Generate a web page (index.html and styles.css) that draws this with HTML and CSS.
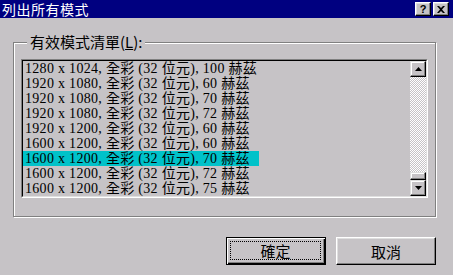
FILE: index.html
```html
<!DOCTYPE html>
<html lang="zh-Hant">
<head>
    <meta charset="UTF-8">
    <title>列出所有模式</title>
    <link rel="stylesheet" href="styles.css">
</head>
<body>
    <div class="dialog">
        <div class="titlebar">
            <span class="title">列出所有模式</span>
            <div class="caption-buttons">
                <div class="cap-btn">?</div>
                <div class="cap-btn">
                    <svg width="8" height="7" viewBox="0 0 8 7"><path d="M0 0h2l2 2 2-2h2L5 3.5 8 7H6L4 5 2 7H0l3-3.5z" fill="#000"/></svg>
                </div>
            </div>
        </div>

        <div class="content">
            <div class="group">
                <span class="group-label">有效模式清單(<u>L</u>):</span>
                <div class="listbox">
                    <div class="listbox-inner">
                        <div class="items">
                            <!-- 模式清單 -->
                            <div class="item">1280 x 1024, 全彩 (32 位元), 100 赫茲</div>
                            <div class="item">1920 x 1080, 全彩 (32 位元), 60 赫茲</div>
                            <div class="item">1920 x 1080, 全彩 (32 位元), 70 赫茲</div>
                            <div class="item">1920 x 1080, 全彩 (32 位元), 72 赫茲</div>
                            <div class="item">1920 x 1200, 全彩 (32 位元), 60 赫茲</div>
                            <div class="item">1600 x 1200, 全彩 (32 位元), 60 赫茲</div>
                            <div class="item selected">1600 x 1200, 全彩 (32 位元), 70 赫茲</div>
                            <div class="item">1600 x 1200, 全彩 (32 位元), 72 赫茲</div>
                            <div class="item">1600 x 1200, 全彩 (32 位元), 75 赫茲</div>
                        </div>
                        <div class="scrollbar">
                            <div class="sb-btn">
                                <svg width="7" height="4" viewBox="0 0 7 4"><path d="M3.5 0L7 4H0z" fill="#000"/></svg>
                            </div>
                            <div class="sb-track"></div>
                            <div class="sb-thumb"></div>
                            <div class="sb-btn">
                                <svg width="7" height="4" viewBox="0 0 7 4"><path d="M0 0h7L3.5 4z" fill="#000"/></svg>
                            </div>
                        </div>
                    </div>
                </div>
            </div>

            <div class="actions">
                <button class="btn default"><span class="focus">確定</span></button>
                <button class="btn">取消</button>
            </div>
        </div>
    </div>
</body>
</html>
```

FILE: styles.css
```css
* {
    box-sizing: border-box;
}
body {
    margin: 0;
    background-color: #c6c3c6;
    font-family: "Noto Sans CJK TC", sans-serif;
    color: #000;
}
.dialog {
    width: 453px;
    height: 275px;
    background-color: #c6c3c6;
}
.titlebar {
    height: 18px;
    background-color: #000080;
    color: #fff;
    display: flex;
    align-items: center;
    justify-content: space-between;
    padding: 0 4px 0 2px;
}
.title {
    font-size: 14px;
    line-height: 16px;
    letter-spacing: 0.5px;
}
.caption-buttons {
    display: flex;
    gap: 2px;
}
.cap-btn {
    width: 16px;
    height: 14px;
    background-color: #c6c3c6;
    border: 1px solid;
    border-color: #fff #000 #000 #fff;
    box-shadow: inset -1px -1px 0 #808080, inset 1px 1px 0 #dfdfdf;
    display: flex;
    align-items: center;
    justify-content: center;
    font: bold 11px "Liberation Sans", sans-serif;
    color: #000;
}
.content {
    padding: 24px 17px 0 13px;
}
.group {
    height: 175px;
    border: 1px solid #808080;
    box-shadow: 1px 1px 0 #fff, inset 1px 1px 0 #fff;
    padding-left: 7px;
}
.group-label {
    display: block;
    width: fit-content;
    height: 17px;
    margin: -10px 0 0 6px;
    padding: 0 3px;
    background-color: #c6c3c6;
    font-size: 15px;
    line-height: 17px;
}
.listbox {
    margin-top: 9px;
    width: 407px;
    height: 139px;
    border: 1px solid;
    border-color: #808080 #fff #fff #808080;
}
.listbox-inner {
    height: 100%;
    border: 1px solid;
    border-color: #000 #dfdfdf #dfdfdf #000;
    display: flex;
}
.items {
    flex: 1;
}
.item {
    width: 236px;
    height: 15px;
    padding-left: 2px;
    font-family: "Liberation Serif", "Noto Sans CJK TC", serif;
    font-size: 14px;
    line-height: 15px;
    letter-spacing: 0.3px;
    white-space: nowrap;
}
.item.selected {
    background-color: #00c2c9;
}
.scrollbar {
    width: 16px;
    display: flex;
    flex-direction: column;
}
.sb-btn, .sb-thumb {
    background-color: #c6c3c6;
    border: 1px solid;
    border-color: #dfdfdf #000 #000 #dfdfdf;
    box-shadow: inset -1px -1px 0 #808080, inset 1px 1px 0 #fff;
}
.sb-btn {
    height: 16px;
    display: flex;
    align-items: center;
    justify-content: center;
}
.sb-thumb {
    height: 8px;
}
.sb-track {
    flex: 1;
    background: repeating-conic-gradient(#fff 0 25%, #c6c3c6 0 50%) 0 0 / 2px 2px;
}
.actions {
    display: flex;
    justify-content: flex-end;
    gap: 10px;
    margin-top: 20px;
}
.btn {
    width: 100px;
    height: 28px;
    padding: 0;
    background-color: #c6c3c6;
    border: 1px solid;
    border-color: #fff #000 #000 #fff;
    box-shadow: inset -1px -1px 0 #808080, inset 1px 1px 0 #dfdfdf;
    font-family: "Noto Sans CJK TC", sans-serif;
    font-size: 15px;
    color: #000;
}
.btn.default {
    border-color: #000;
    box-shadow: inset 1px 1px 0 #fff, inset -1px -1px 0 #000, inset -2px -2px 0 #808080;
    padding: 3px 4px 4px 3px;
}
.focus {
    display: flex;
    height: 100%;
    align-items: center;
    justify-content: center;
    border: 1px dotted #000;
}
```
